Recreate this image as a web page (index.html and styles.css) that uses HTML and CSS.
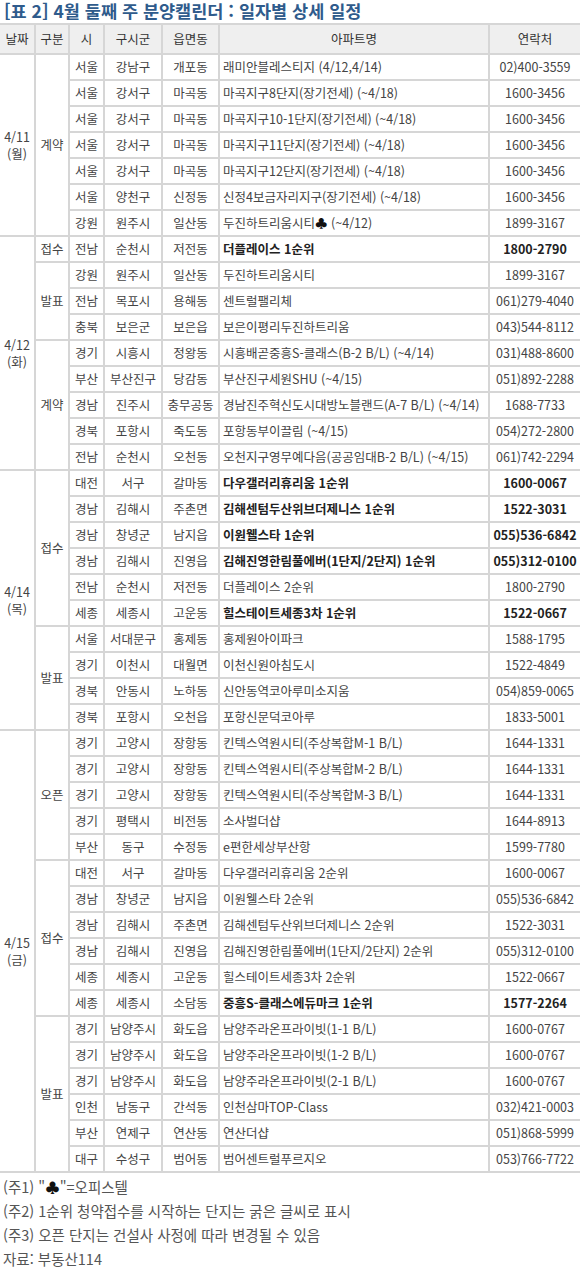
FILE: index.html
```html
<!DOCTYPE html>
<html lang="ko">
<head>
<meta charset="utf-8">
<link rel="stylesheet" href="styles.css">
</head>
<body>
<h1 class="title">[표 2] 4월 둘째 주 분양캘린더 : 일자별 상세 일정</h1>
<table class="cal">
<colgroup>
<col class="c-date"><col class="c-kind"><col class="c-si"><col class="c-gu"><col class="c-dong"><col class="c-apt"><col class="c-tel">
</colgroup>
<thead>
<tr><th>날짜</th><th>구분</th><th>시</th><th>구시군</th><th>읍면동</th><th>아파트명</th><th>연락처</th></tr>
</thead>
<tbody>
<tr class="grp"><td rowspan="7" class="date"><span class="dl">4/11</span><span class="dl">(월)</span></td><td rowspan="7">계약</td><td>서울</td><td>강남구</td><td>개포동</td><td class="apt">래미안블레스티지 (4/12,4/14)</td><td class="tel">02)400-3559</td></tr>
<tr><td>서울</td><td>강서구</td><td>마곡동</td><td class="apt">마곡지구8단지(장기전세) (~4/18)</td><td class="tel">1600-3456</td></tr>
<tr><td>서울</td><td>강서구</td><td>마곡동</td><td class="apt">마곡지구10-1단지(장기전세) (~4/18)</td><td class="tel">1600-3456</td></tr>
<tr><td>서울</td><td>강서구</td><td>마곡동</td><td class="apt">마곡지구11단지(장기전세) (~4/18)</td><td class="tel">1600-3456</td></tr>
<tr><td>서울</td><td>강서구</td><td>마곡동</td><td class="apt">마곡지구12단지(장기전세) (~4/18)</td><td class="tel">1600-3456</td></tr>
<tr><td>서울</td><td>양천구</td><td>신정동</td><td class="apt">신정4보금자리지구(장기전세) (~4/18)</td><td class="tel">1600-3456</td></tr>
<tr><td>강원</td><td>원주시</td><td>일산동</td><td class="apt">두진하트리움시티<span class="club">♣</span> (~4/12)</td><td class="tel">1899-3167</td></tr>

<tr class="grp b"><td rowspan="9" class="date"><span class="dl">4/12</span><span class="dl">(화)</span></td><td>접수</td><td>전남</td><td>순천시</td><td>저전동</td><td class="apt">더플레이스 1순위</td><td class="tel">1800-2790</td></tr>
<tr><td rowspan="3">발표</td><td>강원</td><td>원주시</td><td>일산동</td><td class="apt">두진하트리움시티</td><td class="tel">1899-3167</td></tr>
<tr><td>전남</td><td>목포시</td><td>용해동</td><td class="apt">센트럴팰리체</td><td class="tel">061)279-4040</td></tr>
<tr><td>충북</td><td>보은군</td><td>보은읍</td><td class="apt">보은이평리두진하트리움</td><td class="tel">043)544-8112</td></tr>
<tr><td rowspan="5">계약</td><td>경기</td><td>시흥시</td><td>정왕동</td><td class="apt">시흥배곧중흥S-클래스(B-2 B/L) (~4/14)</td><td class="tel">031)488-8600</td></tr>
<tr><td>부산</td><td>부산진구</td><td>당감동</td><td class="apt">부산진구세원SHU (~4/15)</td><td class="tel">051)892-2288</td></tr>
<tr><td>경남</td><td>진주시</td><td>충무공동</td><td class="apt">경남진주혁신도시대방노블랜드(A-7 B/L) (~4/14)</td><td class="tel">1688-7733</td></tr>
<tr><td>경북</td><td>포항시</td><td>죽도동</td><td class="apt">포항동부이끌림 (~4/15)</td><td class="tel">054)272-2800</td></tr>
<tr><td>전남</td><td>순천시</td><td>오천동</td><td class="apt">오천지구영무예다음(공공임대B-2 B/L) (~4/15)</td><td class="tel">061)742-2294</td></tr>

<tr class="grp b"><td rowspan="10" class="date"><span class="dl">4/14</span><span class="dl">(목)</span></td><td rowspan="6">접수</td><td>대전</td><td>서구</td><td>갈마동</td><td class="apt">다우갤러리휴리움 1순위</td><td class="tel">1600-0067</td></tr>
<tr class="b"><td>경남</td><td>김해시</td><td>주촌면</td><td class="apt">김해센텀두산위브더제니스 1순위</td><td class="tel">1522-3031</td></tr>
<tr class="b"><td>경남</td><td>창녕군</td><td>남지읍</td><td class="apt">이원웰스타 1순위</td><td class="tel">055)536-6842</td></tr>
<tr class="b"><td>경남</td><td>김해시</td><td>진영읍</td><td class="apt">김해진영한림풀에버(1단지/2단지) 1순위</td><td class="tel">055)312-0100</td></tr>
<tr><td>전남</td><td>순천시</td><td>저전동</td><td class="apt">더플레이스 2순위</td><td class="tel">1800-2790</td></tr>
<tr class="b"><td>세종</td><td>세종시</td><td>고운동</td><td class="apt">힐스테이트세종3차 1순위</td><td class="tel">1522-0667</td></tr>
<tr><td rowspan="4">발표</td><td>서울</td><td>서대문구</td><td>홍제동</td><td class="apt">홍제원아이파크</td><td class="tel">1588-1795</td></tr>
<tr><td>경기</td><td>이천시</td><td>대월면</td><td class="apt">이천신원아침도시</td><td class="tel">1522-4849</td></tr>
<tr><td>경북</td><td>안동시</td><td>노하동</td><td class="apt">신안동역코아루미소지움</td><td class="tel">054)859-0065</td></tr>
<tr><td>경북</td><td>포항시</td><td>오천읍</td><td class="apt">포항신문덕코아루</td><td class="tel">1833-5001</td></tr>

<tr class="grp"><td rowspan="17" class="date"><span class="dl">4/15</span><span class="dl">(금)</span></td><td rowspan="5">오픈</td><td>경기</td><td>고양시</td><td>장항동</td><td class="apt">킨텍스역원시티(주상복합M-1 B/L)</td><td class="tel">1644-1331</td></tr>
<tr><td>경기</td><td>고양시</td><td>장항동</td><td class="apt">킨텍스역원시티(주상복합M-2 B/L)</td><td class="tel">1644-1331</td></tr>
<tr><td>경기</td><td>고양시</td><td>장항동</td><td class="apt">킨텍스역원시티(주상복합M-3 B/L)</td><td class="tel">1644-1331</td></tr>
<tr><td>경기</td><td>평택시</td><td>비전동</td><td class="apt">소사벌더샵</td><td class="tel">1644-8913</td></tr>
<tr><td>부산</td><td>동구</td><td>수정동</td><td class="apt">e편한세상부산항</td><td class="tel">1599-7780</td></tr>
<tr><td rowspan="6">접수</td><td>대전</td><td>서구</td><td>갈마동</td><td class="apt">다우갤러리휴리움 2순위</td><td class="tel">1600-0067</td></tr>
<tr><td>경남</td><td>창녕군</td><td>남지읍</td><td class="apt">이원웰스타 2순위</td><td class="tel">055)536-6842</td></tr>
<tr><td>경남</td><td>김해시</td><td>주촌면</td><td class="apt">김해센텀두산위브더제니스 2순위</td><td class="tel">1522-3031</td></tr>
<tr><td>경남</td><td>김해시</td><td>진영읍</td><td class="apt">김해진영한림풀에버(1단지/2단지) 2순위</td><td class="tel">055)312-0100</td></tr>
<tr><td>세종</td><td>세종시</td><td>고운동</td><td class="apt">힐스테이트세종3차 2순위</td><td class="tel">1522-0667</td></tr>
<tr class="b"><td>세종</td><td>세종시</td><td>소담동</td><td class="apt">중흥S-클래스에듀마크 1순위</td><td class="tel">1577-2264</td></tr>
<tr><td rowspan="6">발표</td><td>경기</td><td>남양주시</td><td>화도읍</td><td class="apt">남양주라온프라이빗(1-1 B/L)</td><td class="tel">1600-0767</td></tr>
<tr><td>경기</td><td>남양주시</td><td>화도읍</td><td class="apt">남양주라온프라이빗(1-2 B/L)</td><td class="tel">1600-0767</td></tr>
<tr><td>경기</td><td>남양주시</td><td>화도읍</td><td class="apt">남양주라온프라이빗(2-1 B/L)</td><td class="tel">1600-0767</td></tr>
<tr><td>인천</td><td>남동구</td><td>간석동</td><td class="apt">인천삼마TOP-Class</td><td class="tel">032)421-0003</td></tr>
<tr><td>부산</td><td>연제구</td><td>연산동</td><td class="apt">연산더샵</td><td class="tel">051)868-5999</td></tr>
<tr><td>대구</td><td>수성구</td><td>범어동</td><td class="apt">범어센트럴푸르지오</td><td class="tel">053)766-7722</td></tr>
</tbody>
</table>
<div class="notes">
<p>(주1) "<span class="club">♣</span>"=오피스텔</p>
<p>(주2) 1순위 청약접수를 시작하는 단지는 굵은 글씨로 표시</p>
<p>(주3) 오픈 단지는 건설사 사정에 따라 변경될 수 있음</p>
<p>자료: 부동산114</p>
</div>
</body>
</html>
```
FILE: styles.css
```css
html, body {
  margin: 0;
  padding: 0;
  background: #ffffff;
}
body {
  width: 580px;
  font-family: "Noto Sans CJK KR", "Noto Sans", sans-serif;
  color: #444;
}
.title {
  margin: 0;
  padding: 0 0 0 4px;
  height: 23px;
  line-height: 22px;
  font-size: 17.5px;
  font-weight: bold;
  color: #2f5b8c;
  white-space: nowrap;
}
.cal {
  width: 580px;
  border-collapse: collapse;
  table-layout: fixed;
  font-size: 12.5px;
  border-bottom: 2px solid #d2d2d2;
}
.c-date { width: 35px; }
.c-kind { width: 34px; }
.c-si { width: 35px; }
.c-gu { width: 58px; }
.c-dong { width: 57px; }
.c-apt { width: 270px; }
.c-tel { width: 91px; }
.cal th, .cal td {
  border: 2px solid #d6d6d6;
  padding: 0;
  text-align: center;
  vertical-align: middle;
  white-space: nowrap;
  overflow: hidden;
  line-height: 16px;
}
.cal th {
  height: 28px;
  background: #efefef;
  font-weight: normal;
  color: #333;
  border-top: 2px solid #d6d6d6;
}
.cal tr > :first-child {
  border-left: none;
}
.cal tr > :last-child {
  border-right: none;
}
.cal td {
  height: 26px;
  box-sizing: border-box;
}
.cal td.date {
  border-left: none;
  color: #444;
}
.cal td.date .dl {
  display: block;
  height: 17px;
  line-height: 17px;
}
.cal td.apt {
  text-align: left;
  padding-left: 3px;
}
.cal tr.b td.apt,
.cal tr.b td.tel {
  font-weight: bold;
  color: #222;
}
.cal tr.grp > td {
  border-top: 2px solid #c4c4c4;
}
.club {
  color: #111;
}
.notes {
  padding: 2px 0 0 3px;
  font-size: 14.5px;
  color: #555;
}
.notes p {
  margin: 0;
  line-height: 24px;
  white-space: nowrap;
}
```
